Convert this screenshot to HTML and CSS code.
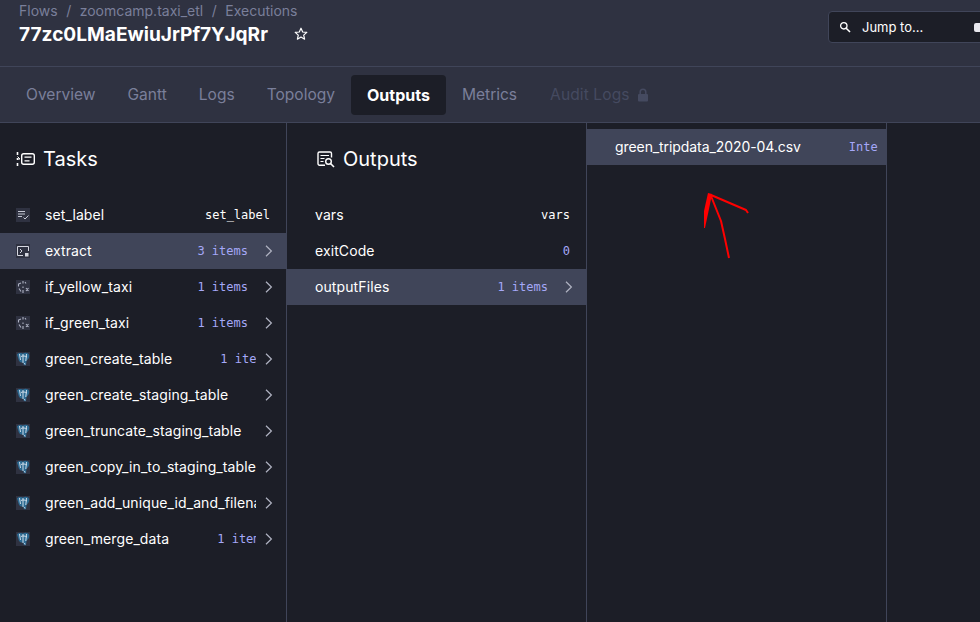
FILE: index.html
```html
<!DOCTYPE html>
<html lang="en">
	<head>
		<meta charset="utf-8" />
		<title>77zc0LMaEwiuJrPf7YJqRr / Outputs</title>
		<link rel="stylesheet" href="styles.css">
	</head>
	<body>
		<svg width="0" height="0" class="defs">
			<symbol id="chevron" viewBox="0 0 14 14">
				<path d="M6 1.7 L11.4 7 L6 12.3" fill="none" stroke="currentColor" stroke-width="1.2" />
			</symbol>
			<symbol id="pg" viewBox="0 0 14 14">
				<rect width="14" height="14" fill="#2f3241" />
				<path d="M1 2.5 C2.5 0 6 1 7 1.5 C9 0 12.5 0.5 13.2 3 C13.6 6 12 7.5 10.5 9 L10 13 C8.5 14 7 12.5 7.2 10.5 C5 11 3 10 2.4 7 Z" fill="#2c6a92" />
				<path d="M3.5 2 L4.5 8 M7 2 V11 M10.5 2 L9.8 9 M5 4.5 C7 3.5 9 4 11 5 M8.5 11 L9 12.5" fill="none" stroke="#dfe8f2" stroke-width="0.9" />
			</symbol>
			<symbol id="branch" viewBox="0 0 14 14">
				<rect width="14" height="14" fill="#2f3241" />
				<path d="M2.5 6.5 V4 L5 3 M7 1 V3.5 M9 2 L10 3.5 M3 8.5 L5 11.5 M7 6.5 V8 M7 10 V13 M10 8 L12.5 11 M12.5 8 L10 11" fill="none" stroke="#aeb2c4" stroke-width="1.1" />
			</symbol>
		</svg>

		<div class="top">
			<div class="title_block">
				<div class="crumbs">Flows<span class="sep">/</span>zoomcamp.taxi_etl<span class="sep">/</span>Executions</div>
				<div class="title_line">
					<h1>77zc0LMaEwiuJrPf7YJqRr</h1>
					<svg class="star" width="14" height="14" viewBox="0 0 14 14">
						<path d="M7 1.2 L8.7 5 L12.8 5.4 L9.7 8.1 L10.6 12.2 L7 10.1 L3.4 12.2 L4.3 8.1 L1.2 5.4 L5.3 5 Z" fill="none" stroke="#ffffff" stroke-width="1.2" stroke-linejoin="round" />
					</svg>
				</div>
			</div>
			<div class="jump">
				<svg width="12" height="12" viewBox="0 0 12 12">
					<circle cx="4.8" cy="4.8" r="3.2" fill="none" stroke="#ffffff" stroke-width="1.3" />
					<path d="M7.2 7.2 L11 11" stroke="#ffffff" stroke-width="1.6" />
				</svg>
				<span>Jump to...</span>
				<span class="kbd"></span>
			</div>
		</div>

		<div class="tabs">
			<a class="tab">Overview</a>
			<a class="tab">Gantt</a>
			<a class="tab">Logs</a>
			<a class="tab">Topology</a>
			<a class="tab active">Outputs</a>
			<a class="tab">Metrics</a>
			<a class="tab disabled">Audit Logs
				<svg width="12" height="14" viewBox="0 0 12 14">
					<path d="M3.2 6 V4 A2.8 2.8 0 0 1 8.8 4 V6" fill="none" stroke="#454a60" stroke-width="1.5" />
					<rect x="1" y="6" width="10" height="7.5" rx="1" fill="#454a60" />
				</svg>
			</a>
		</div>

		<div class="panes">
			<div class="col col_tasks">
				<h2 class="col_head">
					<svg width="19" height="16" viewBox="0 0 19 16">
						<path d="M1.5 1 V4 M1.5 7 V9 M1.5 12 V15" stroke="#ffffff" stroke-width="1.6" fill="none" />
						<path d="M1.5 5.5 L4 8 L1.5 8" stroke="#ffffff" stroke-width="1" fill="none" />
						<rect x="5.7" y="2.7" width="12.6" height="10.6" rx="2" fill="none" stroke="#ffffff" stroke-width="1.4" />
						<path d="M8.5 6.2 H15.5 M8.5 9.8 H13.5" stroke="#ffffff" stroke-width="1.3" />
					</svg>
					Tasks
				</h2>
				<div class="row plain">
					<svg class="ticon" width="14" height="14" viewBox="0 0 14 14">
						<rect width="14" height="14" fill="#2f3241" />
						<path d="M2 3.5 H9 M2 6 H9 M2 8.5 H6 M7.5 9.5 L9 11 L12.5 7.5" fill="none" stroke="#c4c7d4" stroke-width="1" />
					</svg>
					<div class="kv"><span class="key">set_label</span><span class="val white">set_label</span></div>
				</div>
				<div class="row sel">
					<svg class="ticon" width="14" height="14" viewBox="0 0 14 14">
						<rect width="14" height="14" fill="#2f3241" />
						<path d="M7 11.5 H1.5 V2.5 H12.5 V7" fill="none" stroke="#d5d7e0" stroke-width="1" />
						<path d="M4 5 L6 7 L4 9" fill="none" stroke="#d5d7e0" stroke-width="1" />
						<rect x="9" y="9" width="3.5" height="3.5" fill="#d5d7e0" />
					</svg>
					<div class="kv"><span class="key">extract</span><span class="val">3 items</span></div>
					<svg class="chev"><use href="#chevron" /></svg>
				</div>
				<div class="row">
					<svg class="ticon" width="14" height="14"><use href="#branch" /></svg>
					<div class="kv"><span class="key">if_yellow_taxi</span><span class="val">1 items</span></div>
					<svg class="chev"><use href="#chevron" /></svg>
				</div>
				<div class="row">
					<svg class="ticon" width="14" height="14"><use href="#branch" /></svg>
					<div class="kv"><span class="key">if_green_taxi</span><span class="val">1 items</span></div>
					<svg class="chev"><use href="#chevron" /></svg>
				</div>
				<div class="row">
					<svg class="ticon" width="14" height="14"><use href="#pg" /></svg>
					<div class="kv"><span class="key">green_create_table</span><span class="val">1 items</span></div>
					<svg class="chev"><use href="#chevron" /></svg>
				</div>
				<div class="row">
					<svg class="ticon" width="14" height="14"><use href="#pg" /></svg>
					<div class="kv"><span class="key">green_create_staging_table</span><span class="val">1 items</span></div>
					<svg class="chev"><use href="#chevron" /></svg>
				</div>
				<div class="row">
					<svg class="ticon" width="14" height="14"><use href="#pg" /></svg>
					<div class="kv"><span class="key">green_truncate_staging_table</span><span class="val">1 items</span></div>
					<svg class="chev"><use href="#chevron" /></svg>
				</div>
				<div class="row">
					<svg class="ticon" width="14" height="14"><use href="#pg" /></svg>
					<div class="kv"><span class="key">green_copy_in_to_staging_table</span><span class="val">1 items</span></div>
					<svg class="chev"><use href="#chevron" /></svg>
				</div>
				<div class="row">
					<svg class="ticon" width="14" height="14"><use href="#pg" /></svg>
					<div class="kv"><span class="key">green_add_unique_id_and_filename</span><span class="val">1 items</span></div>
					<svg class="chev"><use href="#chevron" /></svg>
				</div>
				<div class="row">
					<svg class="ticon" width="14" height="14"><use href="#pg" /></svg>
					<div class="kv"><span class="key">green_merge_data</span><span class="val">1 items</span></div>
					<svg class="chev"><use href="#chevron" /></svg>
				</div>
			</div>

			<div class="col col_outputs">
				<h2 class="col_head">
					<svg width="18" height="17" viewBox="0 0 18 17">
						<path d="M8 14.3 H2.5 A1.5 1.5 0 0 1 1 12.8 V2.5 A1.5 1.5 0 0 1 2.5 1 H13 A1.5 1.5 0 0 1 14.5 2.5 V6.5" fill="none" stroke="#ffffff" stroke-width="1.4" />
						<path d="M3.5 4.5 H12 M3.5 7.5 H7.5 M3.5 10.5 H6.5" stroke="#ffffff" stroke-width="1.2" />
						<circle cx="11.5" cy="10.5" r="2.8" fill="none" stroke="#ffffff" stroke-width="1.4" />
						<path d="M13.5 12.5 L17 16" stroke="#ffffff" stroke-width="1.6" />
					</svg>
					Outputs
				</h2>
				<div class="row plain">
					<div class="kv"><span class="key">vars</span><span class="val white">vars</span></div>
				</div>
				<div class="row plain">
					<div class="kv"><span class="key">exitCode</span><span class="val">0</span></div>
				</div>
				<div class="row sel">
					<div class="kv"><span class="key">outputFiles</span><span class="val">1 items</span></div>
					<svg class="chev"><use href="#chevron" /></svg>
				</div>
			</div>

			<div class="col col_files">
				<div class="row sel plain">
					<div class="kv"><span class="key">green_tripdata_2020-04.csv</span><span class="val">Internal storage</span></div>
				</div>
			</div>

			<div class="col_rest"></div>
		</div>

		<!-- hand drawn annotation on top of the screenshot -->
		<svg class="scribble" width="60" height="80" viewBox="0 0 60 80">
			<path d="M6 2 L10 3 L7 18 L3 37 L2 37 L2 20 Z" fill="#ff0000" />
			<path d="M9 4 L30 13 L44 19 L46 22 M9 5 L19 30 L23 48 L27 67" fill="none" stroke="#ff0000" stroke-width="2" stroke-linejoin="round" />
		</svg>
	</body>
</html>
```

FILE: styles.css
```css
html,
body
{
	margin: 0;
	padding: 0;
	height: 100%;
	overflow: hidden;
}

body
{
	position: relative;
	background: #1c1e27;
	color: #ffffff;
	font-family: "Inter", "Liberation Sans", sans-serif;
	font-size: 14px;
}

.defs
{
	display: block;
	height: 0;
}

.top
{
	display: flex;
	justify-content: space-between;
	height: 66px;
	padding-left: 19px;
	background: #2f3241;
	border-bottom: 1px solid #404559;
	overflow: hidden;
}

.crumbs
{
	margin-top: 2px;
	line-height: 18px;
	color: #7a7f9a;
}

.sep
{
	margin: 0 8.5px;
}

.title_line
{
	display: flex;
	align-items: center;
	margin-top: 1px;
}

h1
{
	margin: 0;
	font-size: 19.1px;
	line-height: 26px;
	font-weight: 700;
}

.star
{
	margin-left: 26px;
}

.jump
{
	display: flex;
	align-items: center;
	flex-shrink: 0;
	width: 172px;
	height: 32px;
	margin: 11px -20px 0 0;
	padding-left: 10px;
	box-sizing: border-box;
	background: #1c1e27;
	border: 1px solid #404559;
	border-radius: 4px;
	font-size: 13px;
}

.jump span:first-of-type
{
	margin-left: 11px;
}

.kbd
{
	width: 12px;
	height: 9px;
	margin-left: 51px;
	background: #e8e8ee;
	border-radius: 2px;
}

.tabs
{
	display: flex;
	align-items: center;
	height: 55px;
	padding-left: 10px;
	background: #2f3241;
	border-bottom: 1px solid #404559;
	font-size: 15.55px;
}

.tab
{
	display: flex;
	align-items: center;
	height: 40px;
	padding: 0 16px;
	color: #7a7f9a;
	border-radius: 4px;
}

.tab.active
{
	background: #1c1e27;
	color: #ffffff;
	font-size: 16px;
	font-weight: 700;
}

.tab.disabled
{
	padding-left: 17px;
	color: #454a60;
	letter-spacing: 0.1px;
}

.tab.disabled svg
{
	margin-left: 7px;
}

.panes
{
	display: flex;
	height: 499px;
}

.col
{
	box-sizing: border-box;
	flex-shrink: 0;
	border-right: 1px solid #404559;
}

.col_tasks
{
	width: 287px;
}

.col_outputs
{
	width: 300px;
}

.col_files
{
	width: 300px;
	padding-top: 6px;
}

.col_rest
{
	flex: 1;
}

.col_head
{
	display: flex;
	align-items: center;
	gap: 8px;
	height: 24px;
	margin: 0;
	padding: 24px 0 26px 16px;
	font-size: 20px;
	font-weight: 400;
}

.col_outputs .col_head
{
	padding-left: 30px;
}

.row
{
	display: flex;
	align-items: center;
	height: 36px;
	padding: 0 16px;
}

.row.sel
{
	background: #404559;
}

.ticon
{
	flex-shrink: 0;
	margin-right: 15px;
}

.col_outputs .row,
.col_files .row
{
	padding-left: 28px;
}

.col_files .row
{
	padding-right: 8px;
}

.kv
{
	display: flex;
	justify-content: space-between;
	flex: 1;
	min-width: 0;
	padding-bottom: 1px;
	overflow: hidden;
	white-space: nowrap;
}

.key
{
	flex-shrink: 0;
	margin-right: 48px;
	letter-spacing: 0.1px;
}

.col_files .key
{
	letter-spacing: -0.08px;
}

.val
{
	flex-shrink: 0;
	margin: 1px 0 -1px 0;
	padding-right: 8px;
	color: #a5a8f8;
	font-family: "DejaVu Sans Mono", "Liberation Mono", monospace;
	font-size: 12px;
	line-height: 17px;
}

.val.white
{
	color: #ffffff;
}

.plain .val
{
	padding-right: 0;
}

.chev
{
	flex-shrink: 0;
	width: 14px;
	height: 14px;
	margin: 0 -4px 0 4px;
	color: #b0b3c2;
}

.scribble
{
	position: absolute;
	left: 702px;
	top: 191px;
}
```
